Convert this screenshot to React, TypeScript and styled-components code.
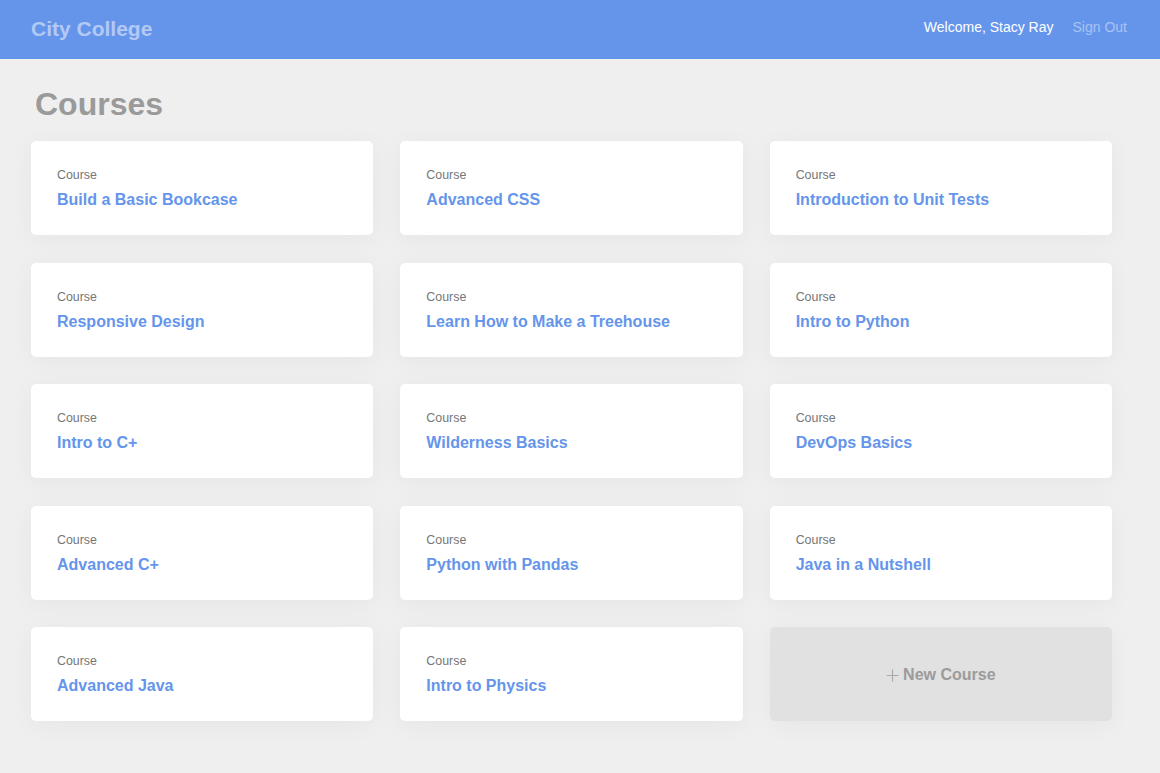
import React from "react";
import styled, { createGlobalStyle } from "styled-components";

const GlobalStyle = createGlobalStyle`
  html, body {
    margin: 0;
    padding: 0;
    background: #efefef;
    font-family: "Liberation Sans", Arial, Helvetica, sans-serif;
  }
  * { box-sizing: border-box; }
`;

const Header = styled.header`
  height: 59px;
  background: #6595eb;
  display: flex;
  align-items: center;
  justify-content: space-between;
  padding: 0 33px 1px 31px;
`;

const Brand = styled.h1`
  margin: 0;
  font-size: 21px;
  line-height: 24px;
  font-weight: 700;
  color: #b3c9f4;
`;

const Nav = styled.nav`
  display: flex;
  align-items: center;
  gap: 19px;
  font-size: 14px;
  line-height: 16px;
  margin-bottom: 5px;
`;

const Welcome = styled.span`
  color: #ffffff;
`;

const NavLink = styled.a`
  color: #a9c3f3;
  text-decoration: none;
  cursor: pointer;
`;

const Main = styled.main`
  padding: 27px 0 40px 31px;
`;

const PageTitle = styled.h2`
  margin: 0 0 19px 4px;
  font-size: 32px;
  line-height: 36px;
  font-weight: 700;
  color: #9a9a9a;
`;

const Grid = styled.div`
  width: 1081px;
  display: grid;
  grid-template-columns: repeat(3, 1fr);
  column-gap: 27px;
  row-gap: 27.5px;
`;

const Card = styled.a<{ $muted?: boolean }>`
  height: 94px;
  border-radius: 5px;
  background: ${(p) => (p.$muted ? "#e1e1e1" : "#ffffff")};
  box-shadow: 0 4px 26px rgba(0, 0, 0, 0.045);
  text-decoration: none;
  display: flex;
  flex-direction: column;
  ${(p) =>
    p.$muted
      ? `align-items: center; justify-content: center; flex-direction: row; gap: 4px; padding-top: 2px;`
      : `padding: 27px 26px 25px 26px;`}
`;

const Label = styled.span`
  font-size: 12.4px;
  line-height: 14px;
  color: #767676;
`;

const CourseTitle = styled.span`
  margin-top: 8px;
  font-size: 16px;
  line-height: 20px;
  font-weight: 700;
  color: #6595eb;
`;

const NewLabel = styled.span`
  font-size: 16px;
  line-height: 20px;
  font-weight: 700;
  color: #9b9b9b;
`;

const PlusIcon = () => (
  <svg width="13" height="13" viewBox="0 0 13 13" aria-hidden="true">
    <path d="M6.5 0.5v12M0.5 6.5h12" stroke="#ababab" strokeWidth="1.2" fill="none" />
  </svg>
);

const courses = [
  "Build a Basic Bookcase",
  "Advanced CSS",
  "Introduction to Unit Tests",
  "Responsive Design",
  "Learn How to Make a Treehouse",
  "Intro to Python",
  "Intro to C+",
  "Wilderness Basics",
  "DevOps Basics",
  "Advanced C+",
  "Python with Pandas",
  "Java in a Nutshell",
  "Advanced Java",
  "Intro to Physics",
];

export default function App() {
  return (
    <>
      <GlobalStyle />
      <Header>
        <Brand>City College</Brand>
        <Nav>
          <Welcome>Welcome, Stacy Ray</Welcome>
          <NavLink>Sign Out</NavLink>
        </Nav>
      </Header>
      <Main>
        <PageTitle>Courses</PageTitle>
        <Grid>
          {courses.map((c) => (
            <Card key={c}>
              <Label>Course</Label>
              <CourseTitle>{c}</CourseTitle>
            </Card>
          ))}
          <Card $muted>
            <PlusIcon />
            <NewLabel>New Course</NewLabel>
          </Card>
        </Grid>
      </Main>
    </>
  );
}
